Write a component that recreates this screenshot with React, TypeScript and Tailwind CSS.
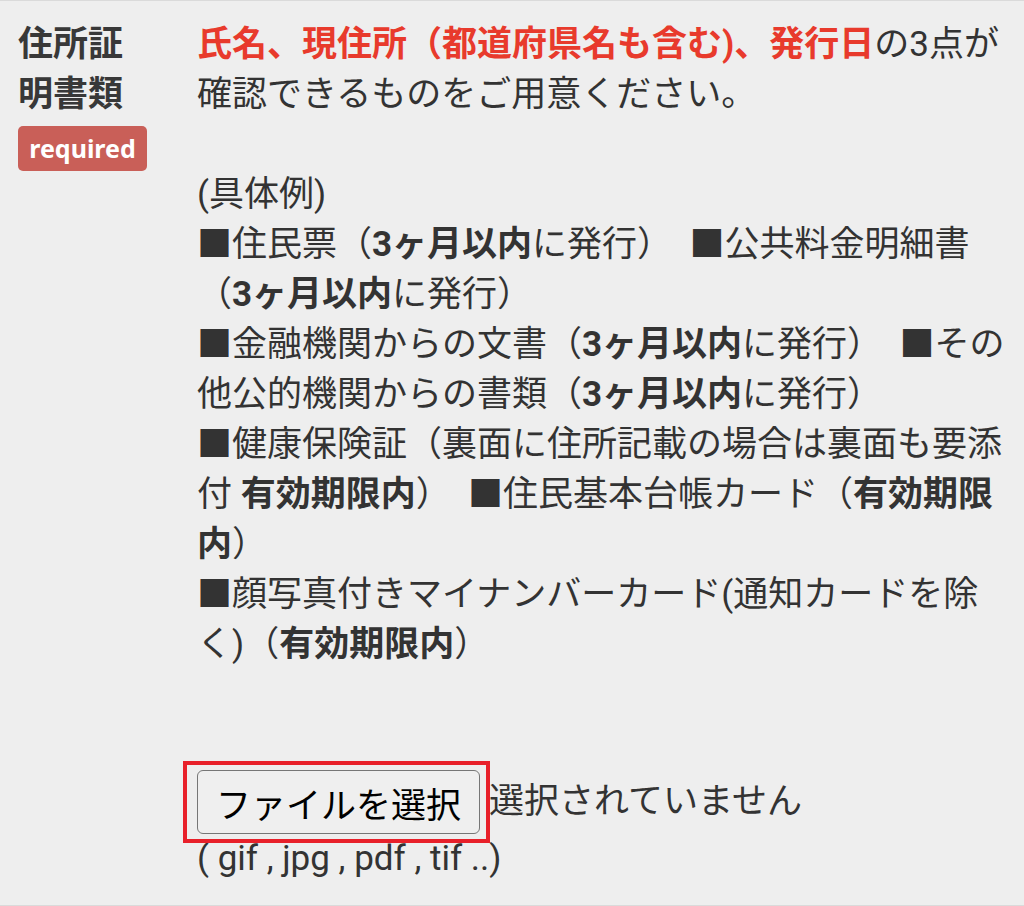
import React from "react";

const B = ({ children }: { children: React.ReactNode }) => (
  <span className="font-bold">{children}</span>
);

export default function App() {
  const font = { fontFamily: "Roboto, 'Noto Sans CJK JP', sans-serif" };
  return (
    <div
      className="w-[1024px] h-[906px] bg-[#eeeeee] border-t border-b border-[#dadada] flex text-[#333333] overflow-hidden"
      style={font}
    >
      <div className="w-[197px] shrink-0 pl-[18px] pt-[19px]">
        <div className="text-[35px] leading-[50px] font-bold text-[#383838]">
          住所証
          <br />
          明書類
        </div>
        <div
          className="mt-[6px] w-[129px] h-[45px] rounded-[5px] bg-[#c95f58] text-white font-bold text-[25px] flex items-center justify-center"
          style={{ fontFamily: "'Noto Sans', sans-serif" }}
        >
          required
        </div>
      </div>
      <div className="flex-1 pt-[19px] text-[35px] leading-[50px] whitespace-nowrap">
        <div>
          <span className="font-bold text-[#e83a2c]">氏名、現住所（都道府県名も含む)、発行日</span>の3点が
        </div>
        <div>確認できるものをご用意ください。</div>
        <div>&nbsp;</div>
        <div>(具体例)</div>
        <div>
          ■住民票（<B>3ヶ月以内</B>に発行）&nbsp; ■公共料金明細書
        </div>
        <div>
          （<B>3ヶ月以内</B>に発行）
        </div>
        <div>
          ■金融機関からの文書（<B>3ヶ月以内</B>に発行）&nbsp; ■その
        </div>
        <div>
          他公的機関からの書類（<B>3ヶ月以内</B>に発行）
        </div>
        <div>■健康保険証（裏面に住所記載の場合は裏面も要添</div>
        <div>
          付 <B>有効期限内</B>）&nbsp; ■住民基本台帳カード（<B>有効期限</B>
        </div>
        <div>
          <B>内</B>）
        </div>
        <div>■顔写真付きマイナンバーカード(通知カードを除</div>
        <div>
          く)（<B>有効期限内</B>）
        </div>
        <div>&nbsp;</div>
        <div>&nbsp;</div>
        <div className="flex items-center h-[64px] gap-[9px]">
          <div className="relative">
            <button
              className="h-[64px] px-[18px] border-[1.5px] border-[#767676] rounded-[6px] bg-[#efefef] text-black text-[35px] leading-none"
              style={{ fontFamily: "'Noto Sans CJK JP', sans-serif" }}
            >
              ファイルを選択
            </button>
            <div className="absolute left-[-14px] top-[-9px] right-[-10px] bottom-[-9px] border-[4px] border-[#e8202a] pointer-events-none" />
          </div>
          <span>選択されていません</span>
        </div>
        <div>( gif , jpg , pdf , tif ..)</div>
      </div>
    </div>
  );
}
